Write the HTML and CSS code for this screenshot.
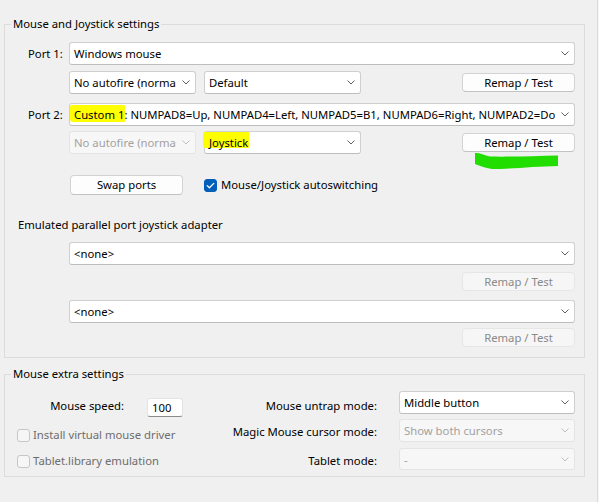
FILE: index.html
```html
<!DOCTYPE html>
<html>
<head>
<meta charset="utf-8">
<link rel="stylesheet" href="styles.css">
</head>
<body>
<div class="window">
  <section class="group g1">
    <div class="legend">Mouse and Joystick settings</div>

    <div class="row r1">
      <span class="port-label">Port 1:</span>
      <div class="select grow"><span class="val">Windows mouse</span><svg class="chev" width="8" height="5" viewBox="0 0 8 5"><path d="M0.5 0.5 L4 4 L7.5 0.5"/></svg></div>
    </div>

    <div class="row r2 sub">
      <div class="select autofire"><span class="val">No autofire (normal)</span><svg class="chev" width="8" height="5" viewBox="0 0 8 5"><path d="M0.5 0.5 L4 4 L7.5 0.5"/></svg></div>
      <div class="select mode"><span class="val">Default</span><svg class="chev" width="8" height="5" viewBox="0 0 8 5"><path d="M0.5 0.5 L4 4 L7.5 0.5"/></svg></div>
      <button class="btn remap">Remap / Test</button>
    </div>

    <div class="row r3">
      <span class="port-label">Port 2:</span>
      <div class="select grow"><span class="val"><mark class="hl hl-custom">Custom 1</mark>: NUMPAD8=Up, NUMPAD4=Left, NUMPAD5=B1, NUMPAD6=Right, NUMPAD2=Down</span><svg class="chev" width="8" height="5" viewBox="0 0 8 5"><path d="M0.5 0.5 L4 4 L7.5 0.5"/></svg></div>
    </div>

    <div class="row r4 sub">
      <div class="select autofire disabled"><span class="val">No autofire (normal)</span><svg class="chev" width="8" height="5" viewBox="0 0 8 5"><path d="M0.5 0.5 L4 4 L7.5 0.5"/></svg></div>
      <div class="select mode"><span class="val free"><mark class="hl hl-joy">Joystick</mark></span><svg class="chev" width="8" height="5" viewBox="0 0 8 5"><path d="M0.5 0.5 L4 4 L7.5 0.5"/></svg></div>
      <button class="btn remap">Remap / Test</button>
      <svg class="scribble" width="95" height="25" viewBox="0 0 95 25"><path d="M5 3 C9 2.5 14 5 20 6.5 C40 7 65 6 88 5.5 L88 16 C65 16.5 40 19 22 19 C15 18 9 15.5 5 14 Z"/></svg>
    </div>

    <div class="row r5">
      <button class="btn swap">Swap ports</button>
      <label class="check on"><span class="box checked"><svg width="11" height="11" viewBox="0 0 11 11"><path d="M2.2 5.6 L4.4 7.8 L8.8 3.4"/></svg></span>Mouse/Joystick autoswitching</label>
    </div>

    <div class="subhead">Emulated parallel port joystick adapter</div>

    <div class="row par sel-a">
      <div class="select grow"><span class="val">&lt;none&gt;</span><svg class="chev" width="8" height="5" viewBox="0 0 8 5"><path d="M0.5 0.5 L4 4 L7.5 0.5"/></svg></div>
    </div>
    <div class="row par btn-a">
      <button class="btn remap disabled">Remap / Test</button>
    </div>
    <div class="row par sel-b">
      <div class="select grow"><span class="val">&lt;none&gt;</span><svg class="chev" width="8" height="5" viewBox="0 0 8 5"><path d="M0.5 0.5 L4 4 L7.5 0.5"/></svg></div>
    </div>
    <div class="row par btn-b">
      <button class="btn remap disabled">Remap / Test</button>
    </div>
  </section>

  <section class="group g2">
    <div class="legend">Mouse extra settings</div>
    <div class="g2-body">
      <div class="g2-left">
        <div class="speed-row">
          <span class="speed-label">Mouse speed:</span>
          <span class="input">100</span>
        </div>
        <label class="check disabled cb1"><span class="box"></span>Install virtual mouse driver</label>
        <label class="check disabled cb2"><span class="box"></span>Tablet.library emulation</label>
      </div>
      <div class="g2-right">
        <span class="flabel l1">Mouse untrap mode:</span>
        <div class="select"><span class="val">Middle button</span><svg class="chev" width="8" height="5" viewBox="0 0 8 5"><path d="M0.5 0.5 L4 4 L7.5 0.5"/></svg></div>
        <span class="flabel">Magic Mouse cursor mode:</span>
        <div class="select disabled"><span class="val">Show both cursors</span><svg class="chev" width="8" height="5" viewBox="0 0 8 5"><path d="M0.5 0.5 L4 4 L7.5 0.5"/></svg></div>
        <span class="flabel l3">Tablet mode:</span>
        <div class="select disabled s3"><span class="val">-</span><svg class="chev" width="8" height="5" viewBox="0 0 8 5"><path d="M0.5 0.5 L4 4 L7.5 0.5"/></svg></div>
      </div>
    </div>
  </section>
</div>
</body>
</html>
```

FILE: styles.css
```css
* { box-sizing: border-box; }

html, body {
  margin: 0;
  height: 100%;
}

body {
  background: #f6f6f6;
  font-family: "Noto Sans", sans-serif;
  font-size: 11.3px;
  line-height: 16px;
  color: #000;
  overflow: hidden;
}

.window {
  width: 598px;
  height: 502px;
  background: #f0f0f0;
  border-right: 1px solid #dcdcdc;
  padding-top: 24px;
}

.group {
  margin: 0 12px 0 4px;
  padding: 0 9px 0 0;
  border: 1px solid #dcdcdc;
}

.legend {
  display: table;
  margin: -9px 0 0 6px;
  padding: 0 2px;
  line-height: 16px;
  background: #f0f0f0;
}

.g1 { padding-bottom: 10px; }

.row {
  display: flex;
  align-items: center;
}

.port-label {
  flex: none;
  width: 64px;
  padding-left: 23px;
}

/* combo boxes */
.select {
  display: flex;
  align-items: center;
  height: 23px;
  min-width: 0;
  background: #fff;
  border: 1px solid #cfcfcf;
  border-bottom-color: #bdbdbd;
  border-radius: 3px;
  padding: 0 5px 0 0;
}

.select .val {
  flex: 1;
  min-width: 0;
  align-self: stretch;
  line-height: 21px;
  padding-left: 4px;
  margin-right: 6px;
  white-space: nowrap;
  overflow: hidden;
}

.select .val.free { overflow: visible; }

.chev {
  flex: none;
  fill: none;
  stroke: #5f5f5f;
  stroke-width: 1;
}

.select.disabled {
  background: #f7f7f7;
  border-color: #e4e4e4;
  color: #a2a2a2;
}

.select.disabled .chev { stroke: #c0c0c0; }

.grow { flex: 1 1 0; min-width: 0; }

.sub { padding-left: 64px; }

.autofire { flex: none; width: 127px; }
.mode { flex: none; width: 157px; margin-left: 8px; }

/* buttons */
.btn {
  font: inherit;
  line-height: 16px;
  color: #000;
  height: 20px;
  padding: 0;
  background: #fdfdfd;
  border: 1px solid #d3d3d3;
  border-bottom-color: #c2c2c2;
  border-radius: 4px;
}

.btn.remap {
  margin-left: auto;
  width: 113px;
  height: 19px;
}

.btn.disabled {
  background: #f6f6f6;
  border-color: #e6e6e6;
  color: #8a8a8a;
}

.btn.swap { width: 113px; }

.r1 { margin-top: 10px; }
.r2 { margin-top: 6px; }
.r3 { margin-top: 9px; }
.r4 { margin-top: 5px; position: relative; }
.r5 { margin-top: 21px; padding-left: 65px; }

/* highlighter marks */
mark.hl {
  background: transparent;
  color: inherit;
  position: relative;
  z-index: 0;
}

mark.hl::before {
  content: "";
  position: absolute;
  z-index: -1;
  background: #ffff00;
  border-radius: 2px 1px 1px 3px;
}

.hl-custom::before { left: -4px; right: -1px; top: -2px; bottom: 0; }
.hl-joy::before { left: -6px; right: -1px; top: -3px; bottom: 2px; }

.scribble {
  position: absolute;
  left: 465px;
  top: 19px;
  fill: #22dd00;
}

/* checkboxes */
.check {
  display: flex;
  align-items: center;
}

.r5 .check { margin-left: 21px; }

.box {
  flex: none;
  width: 13px;
  height: 13px;
  border: 1px solid #c6c6c6;
  border-radius: 3px;
  background: #f6f6f6;
  margin-right: 3px;
}

.box.checked {
  background: #005fb8;
  border-color: #005fb8;
  margin-right: 4px;
}

.box svg {
  display: block;
  fill: none;
  stroke: #fff;
  stroke-width: 1.3;
  stroke-linecap: round;
  stroke-linejoin: round;
}

.check.disabled { color: #6d6d6d; }

.subhead {
  margin-top: 22px;
  padding-left: 13px;
}

.par {
  padding-left: 64px;
  justify-content: flex-end;
}

.sel-a { margin-top: 9px; }
.btn-a { margin-top: 7px; }
.sel-b { margin-top: 9px; }
.btn-b { margin-top: 5px; }

/* group 2 */
.g2 {
  margin-top: 16px;
  padding-bottom: 6px;
}

.g2-body {
  display: flex;
  align-items: flex-start;
}

.g2-left {
  flex: none;
  width: 195px;
  padding-top: 16px;
}

.speed-row {
  display: flex;
  align-items: center;
  height: 19px;
}

.speed-label {
  flex: none;
  width: 119px;
  text-align: right;
  padding-bottom: 3px;
}

.input {
  margin-left: 23px;
  width: 36px;
  height: 19px;
  background: #fff;
  border: 1px solid #e3e3e3;
  border-bottom-color: #8a8a8a;
  border-radius: 3px;
  padding-left: 4px;
  line-height: 17px;
}

.cb1 { margin-top: 10px; padding-left: 12px; }
.cb2 { margin-top: 10px; padding-left: 12px; }

.g2-right {
  display: grid;
  grid-template-columns: 177px 176px;
  column-gap: 22px;
  row-gap: 5px;
  padding-top: 9px;
  align-items: center;
  align-content: start;
}

.flabel {
  text-align: right;
  padding-top: 3px;
}

.flabel.l1 { padding-top: 6px; }
.flabel.l3 { margin-top: 1px; }

.select.s3 { height: 22px; margin-top: 1px; }
```
